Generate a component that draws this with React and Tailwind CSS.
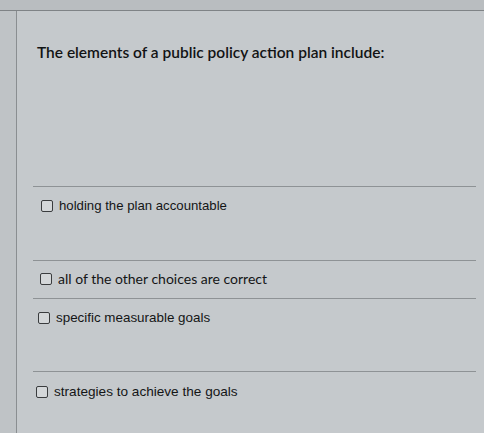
import React from "react";

const Box = () => (
  <span className="inline-block w-[12px] h-[12px] rounded-[2px] border-[1.5px] border-[#3a3c3e] bg-[#d4d7d9] shrink-0" />
);

const Option = ({ label, height, pt, pl, font }) => (
  <div className="border-t border-[#8e9295]" style={{ height }}>
    <div className="flex items-center gap-[6px]" style={{ paddingTop: pt, paddingLeft: pl }}>
      <Box />
      <span className={`leading-[16px] text-[#141516] ${font}`}>{label}</span>
    </div>
  </div>
);

export default function App() {
  return (
    <div className="w-[484px] h-[433px] overflow-hidden bg-[#c5c9cc] flex flex-col">
      <div className="h-[11px] bg-[#b9bdc0] border-b border-[#7f8386] shrink-0" />
      <div className="flex flex-1">
        <div className="w-[17px] bg-[#bfc3c6] border-r border-[#8a8e91] shrink-0" />
        <div className="flex-1 flex flex-col">
          <p className="pl-[20px] pt-[31px] text-[15.5px] leading-[20px] text-[#121314] font-['Lato',sans-serif] font-semibold">
            The elements of a public policy action plan include:
          </p>
          <div className="mt-[124px] ml-[16px] mr-[8px] flex flex-col">
            <Option label="holding the plan accountable" height="74px" pt="11px" pl="8px" font="font-['Liberation_Sans',sans-serif] text-[13.2px]" />
            <Option label="all of the other choices are correct" height="38px" pt="10px" pl="7px" font="font-['Lato',sans-serif] text-[14px]" />
            <Option label="specific measurable goals" height="73px" pt="11px" pl="5px" font="font-['Liberation_Sans',sans-serif] text-[13.4px]" />
            <Option label="strategies to achieve the goals" height="61px" pt="12px" pl="3px" font="font-['Liberation_Sans',sans-serif] text-[13.6px]" />
          </div>
        </div>
      </div>
    </div>
  );
}
